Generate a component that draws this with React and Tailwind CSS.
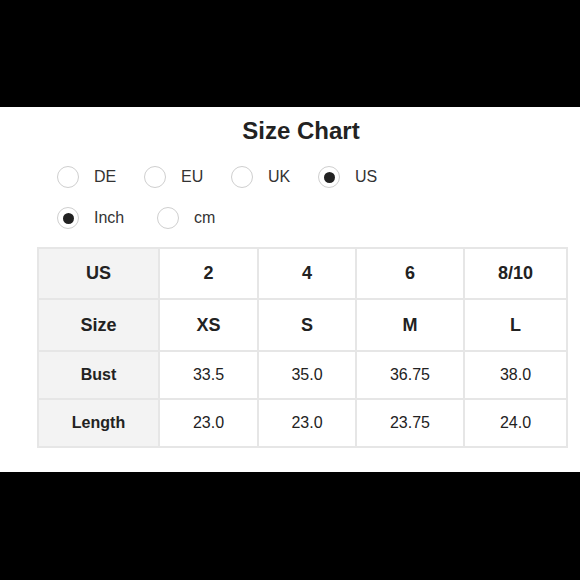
const units = [
  { label: "DE", checked: false },
  { label: "EU", checked: false },
  { label: "UK", checked: false },
  { label: "US", checked: true },
];

const measures = [
  { label: "Inch", checked: true, width: "w-[100px]" },
  { label: "cm", checked: false, width: "w-[87px]" },
];

const rows = [
  { head: "US", cells: ["2", "4", "6", "8/10"], bold: true },
  { head: "Size", cells: ["XS", "S", "M", "L"], bold: true },
  { head: "Bust", cells: ["33.5", "35.0", "36.75", "38.0"], bold: false },
  { head: "Length", cells: ["23.0", "23.0", "23.75", "24.0"], bold: false },
];

const rowHeights = ["h-[49px]", "h-[50px]", "h-[46px]", "h-[46px]"];

function Radio({ label, checked, width = "w-[87px]" }) {
  return (
    <div className={`flex items-center gap-[15px] ${width}`}>
      <span className="flex h-[22px] w-[22px] shrink-0 items-center justify-center rounded-full border-[1.5px] border-[#cfcfcf] bg-white">
        {checked ? <span className="h-[11px] w-[11px] rounded-full bg-[#222]" /> : null}
      </span>
      <span className="text-[16px] text-[#333]">{label}</span>
    </div>
  );
}

export default function App() {
  return (
    <div className="flex h-[580px] w-[580px] flex-col bg-black" style={{ fontFamily: '"Liberation Sans", Arial, sans-serif' }}>
      <div className="h-[107px]" />
      <div className="h-[365px] bg-white">
        <h1 className="pl-[22px] pt-[10px] text-center text-[24px] font-bold leading-[28px] text-[#222]">
          Size Chart
        </h1>

        <div className="mt-[20px] flex pl-[57px]">
          {units.map((u) => (
            <Radio key={u.label} label={u.label} checked={u.checked} />
          ))}
        </div>

        <div className="mt-[17px] flex pl-[57px]">
          {measures.map((m) => (
            <Radio key={m.label} label={m.label} checked={m.checked} width={m.width} />
          ))}
        </div>

        <div className="ml-[37px] mt-[17px] grid w-[531px] grid-cols-[119px_97px_96px_106px_101px] gap-[2px] bg-[#e6e6e6] p-[2px]">
          {rows.map((row, i) => (
            <div key={row.head} className="contents">
              <div className={`flex ${rowHeights[i]} items-center justify-center bg-[#f3f3f3] font-bold text-[#222] ${i < 2 ? "text-[18px]" : "text-[16px]"}`}>
                {row.head}
              </div>
              {row.cells.map((c, j) => (
                <div
                  key={j}
                  className={`flex ${rowHeights[i]} items-center justify-center bg-white text-[#222] ${row.bold ? "text-[18px] font-bold" : "text-[16px]"}`}
                >
                  {c}
                </div>
              ))}
            </div>
          ))}
        </div>
      </div>
      <div className="flex-1" />
    </div>
  );
}
